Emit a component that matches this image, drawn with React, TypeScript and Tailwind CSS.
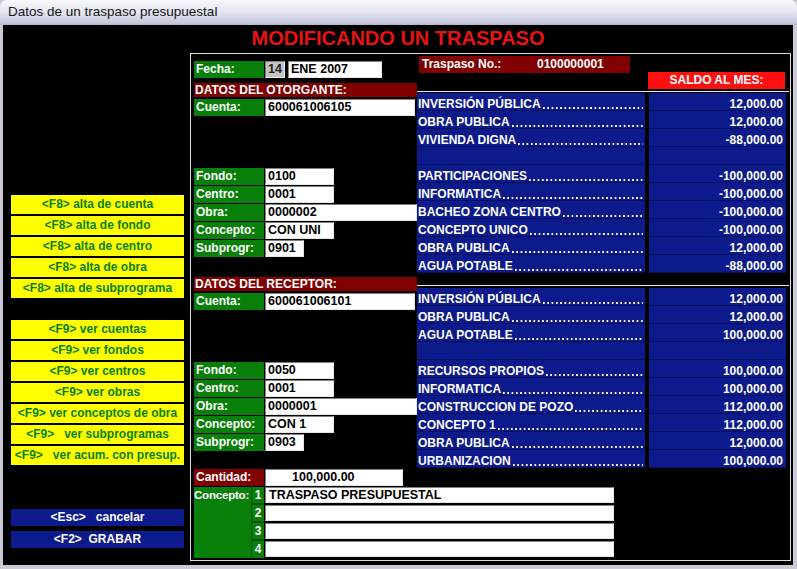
import React from "react";

const font = "font-['Liberation_Sans',Arial,Helvetica,sans-serif]";

type Item = [string, string] | null;

const g1: Item[] = [
  ["INVERSIÓN PÚBLICA", "12,000.00"],
  ["OBRA PUBLICA", "12,000.00"],
  ["VIVIENDA DIGNA", "-88,000.00"],
  null,
  ["PARTICIPACIONES", "-100,000.00"],
  ["INFORMATICA", "-100,000.00"],
  ["BACHEO ZONA CENTRO", "-100,000.00"],
  ["CONCEPTO UNICO", "-100,000.00"],
  ["OBRA PUBLICA", "12,000.00"],
  ["AGUA POTABLE", "-88,000.00"],
];

const g2: Item[] = [
  ["INVERSIÓN PÚBLICA", "12,000.00"],
  ["OBRA PUBLICA", "12,000.00"],
  ["AGUA POTABLE", "100,000.00"],
  null,
  ["RECURSOS PROPIOS", "100,000.00"],
  ["INFORMATICA", "100,000.00"],
  ["CONSTRUCCION DE POZO", "112,000.00"],
  ["CONCEPTO 1", "112,000.00"],
  ["OBRA PUBLICA", "12,000.00"],
  ["URBANIZACION", "100,000.00"],
];

const f8 = [
  "<F8> alta de cuenta",
  "<F8> alta de fondo",
  "<F8> alta de centro",
  "<F8> alta de obra",
  "<F8> alta de subprograma",
];

const f9 = [
  "<F9> ver cuentas",
  "<F9> ver fondos",
  "<F9> ver centros",
  "<F9> ver obras",
  "<F9> ver conceptos de obra",
  "<F9>   ver subprogramas",
  "<F9>   ver acum. con presup.",
];

const fieldCls =
  "h-[17px] bg-white border border-t-[#808080] border-l-[#808080] border-b-[#e6e6e6] border-r-[#e6e6e6] text-black font-bold text-[12.5px] leading-[15px] pl-[2px] whitespace-nowrap overflow-hidden";

function Row({ label, value, w }: { label: string; value: string; w: string }) {
  return (
    <div className="flex h-[17px] gap-[1px]">
      <div className="w-[70px] h-[17px] bg-[#087f08] text-white font-bold text-[12px] leading-[16px] pl-[2px]">
        {label}
      </div>
      <div className={`${fieldCls} ${w}`}>{value}</div>
    </div>
  );
}

function Group({ rows }: { rows: [string, string, string][] }) {
  return (
    <div className="flex flex-col gap-[1px]">
      {rows.map(([l, v, w], i) => (
        <Row key={i} label={l} value={v} w={w} />
      ))}
    </div>
  );
}

function RedBar({ children }: { children: React.ReactNode }) {
  return (
    <div className="w-[223px] h-[14px] bg-[#800000] text-white font-bold text-[12px] leading-[14px] pl-[1px]">
      {children}
    </div>
  );
}

function BlueGroup({ items }: { items: Item[] }) {
  return (
    <div className="flex gap-[4px] h-[180px]">
      <div className="w-[228px] flex flex-col bg-[#0c1a8c]">
        {items.map((it, i) => (
          <div
            key={i}
            className="h-[18px] border-b border-[#080f5e] flex whitespace-nowrap text-white font-bold text-[12px] leading-[16px] pt-[3px] pl-[1px] pr-[2px]"
          >
            {it && (
              <>
                <span>{it[0]}</span>
                <div className="flex-1 ml-[2px] mt-[11px] h-[2px] bg-[linear-gradient(to_right,#ffffff_0_2px,transparent_2px)] bg-[length:4.3px_2px]" />
              </>
            )}
          </div>
        ))}
      </div>
      <div className="w-[137px] flex flex-col bg-[#0c1a8c]">
        {items.map((it, i) => (
          <div
            key={i}
            className="h-[18px] border-b border-[#080f5e] text-right pr-[3px] pt-[3px] text-white font-bold text-[12px] leading-[16px]"
          >
            {it ? it[1] : ""}
          </div>
        ))}
      </div>
    </div>
  );
}

function YBtn({ t }: { t: string }) {
  return (
    <div className="w-[173px] h-[19px] bg-[#ffff00] text-[#087f08] font-bold text-[12px] leading-[19px] text-center whitespace-pre overflow-visible">
      {t}
    </div>
  );
}

function NBtn({ t }: { t: string }) {
  return (
    <div className="w-[173px] h-[17px] bg-[#0c1a8c] text-white font-bold text-[12px] leading-[17px] text-center whitespace-pre">
      {t}
    </div>
  );
}

export default function App() {
  return (
    <div className={`w-[797px] h-[569px] bg-[#c9cad6] flex flex-col overflow-hidden ${font}`}>
      <div className="h-[25px] rounded-t-[7px] bg-linear-to-b from-[#f8f8fd] via-[#e4e5f0] to-[#c3c5da] flex items-center pl-[8px] text-[13.5px] text-[#151515] border-b border-[#b8bacc]">
        Datos de un traspaso presupuestal
      </div>
      <div className="ml-[3px] mr-[4px] h-[540px] bg-black flex flex-col">
        <div className="h-[28px] text-center text-[#e81414] font-bold text-[20px] leading-[27px]">
          MODIFICANDO UN TRASPASO
        </div>
        <div className="flex">
          {/* sidebar */}
          <div className="w-[187px] flex flex-col pl-[8px]">
            <div className="mt-[142px] flex flex-col gap-[2px]">
              {f8.map((t) => (
                <YBtn key={t} t={t} />
              ))}
            </div>
            <div className="mt-[22px] flex flex-col gap-[2px]">
              {f9.map((t) => (
                <YBtn key={t} t={t} />
              ))}
            </div>
            <div className="mt-[44px] flex flex-col gap-[5px]">
              <NBtn t={"<Esc>   cancelar"} />
              <NBtn t={"<F2>  GRABAR"} />
            </div>
          </div>
          {/* panel */}
          <div className="w-[601px] h-[508px] border border-[#dcdcdc] flex flex-col">
            <div className="flex">
              {/* left form */}
              <div className="w-[226px] pl-[3px] flex flex-col">
                <div className="mt-[7px] flex h-[17px]">
                  <div className="w-[70px] h-[17px] bg-[#087f08] text-white font-bold text-[12px] leading-[16px] pl-[2px]">
                    Fecha:
                  </div>
                  <div className="ml-[1px] w-[20px] h-[17px] bg-[#c4c4c4] border border-t-[#808080] border-l-[#808080] border-b-[#e6e6e6] border-r-[#e6e6e6] text-[#202020] font-bold text-[12.5px] leading-[15px] pl-[2px]">
                    14
                  </div>
                  <div className={`ml-[3px] w-[94px] ${fieldCls}`}>ENE 2007</div>
                </div>
                <div className="mt-[5px]">
                  <RedBar>DATOS DEL OTORGANTE:</RedBar>
                </div>
                <div className="mt-[2px]">
                  <Row label="Cuenta:" value="600061006105" w="w-[150px]" />
                </div>
                <div className="mt-[52px]">
                  <Group
                    rows={[
                      ["Fondo:", "0100", "w-[69px]"],
                      ["Centro:", "0001", "w-[69px]"],
                      ["Obra:", "0000002", "w-[152px]"],
                      ["Concepto:", "CON UNI", "w-[69px]"],
                      ["Subprogr:", "0901", "w-[39px]"],
                    ]}
                  />
                </div>
                <div className="mt-[20px]">
                  <RedBar>DATOS DEL RECEPTOR:</RedBar>
                </div>
                <div className="mt-[2px]">
                  <Row label="Cuenta:" value="600061006101" w="w-[150px]" />
                </div>
                <div className="mt-[52px]">
                  <Group
                    rows={[
                      ["Fondo:", "0050", "w-[69px]"],
                      ["Centro:", "0001", "w-[69px]"],
                      ["Obra:", "0000001", "w-[152px]"],
                      ["Concepto:", "CON 1", "w-[69px]"],
                      ["Subprogr:", "0903", "w-[39px]"],
                    ]}
                  />
                </div>
              </div>
              {/* right */}
              <div className="w-[372px] flex flex-col">
                <div className="h-[35px] flex">
                  <div className="ml-[2px] mt-[2px] w-[211px] h-[17px] bg-[#800000] text-white font-bold text-[12px] leading-[17px] flex whitespace-nowrap">
                    <span className="pl-[3px] w-[118px]">Traspaso No.:</span>
                    <span>0100000001</span>
                  </div>
                  <div className="ml-[18px] mt-[18px] w-[137px] h-[17px] bg-[#ff1010] text-white font-bold text-[12px] leading-[17px] text-center">
                    SALDO AL MES:
                  </div>
                </div>
                <div className="mt-[2px] h-[1px] bg-[#e8e8e8]" />
                <div className="mt-[1px]">
                  <BlueGroup items={g1} />
                </div>
                <div className="mt-[12px] h-[1px] bg-[#e8e8e8]" />
                <div className="mt-[2px]">
                  <BlueGroup items={g2} />
                </div>
              </div>
            </div>
            {/* bottom */}
            <div className="pl-[3px] flex flex-col">
              <div className="mt-[1px] flex h-[17px] gap-[1px]">
                <div className="w-[70px] h-[17px] bg-[#800000] text-white font-bold text-[12px] leading-[16px] pl-[2px]">
                  Cantidad:
                </div>
                <div className={`${fieldCls} w-[138px] !pl-[26px]`}>100,000.00</div>
              </div>
              <div className="mt-[1px] flex h-[70px]">
                <div className="w-[58px] h-[71px] bg-[#087f08] text-white font-bold text-[11.5px] tracking-[-0.2px] leading-[16px] border-r border-[#045004] whitespace-nowrap">
                  Concepto:
                </div>
                <div className="w-[12px] h-[71px] flex flex-col gap-[2px] bg-[#045004]">
                  {["1", "2", "3", "4"].map((n) => (
                    <div
                      key={n}
                      className={`${n === "4" ? "h-[17px]" : "h-[16px]"} bg-[#087f08] text-white font-bold text-[12px] leading-[16px] text-center`}
                    >
                      {n}
                    </div>
                  ))}
                </div>
                <div className="ml-[1px] flex flex-col gap-[2px]">
                  {["TRASPASO PRESUPUESTAL", "", "", ""].map((t, i) => (
                    <div
                      key={i}
                      className="w-[349px] h-[16px] bg-white border border-t-[#808080] border-l-[#808080] border-b-[#e6e6e6] border-r-[#e6e6e6] text-black font-bold text-[12.5px] leading-[14px] pl-[3px] whitespace-nowrap"
                    >
                      {t}
                    </div>
                  ))}
                </div>
              </div>
            </div>
          </div>
        </div>
      </div>
    </div>
  );
}
